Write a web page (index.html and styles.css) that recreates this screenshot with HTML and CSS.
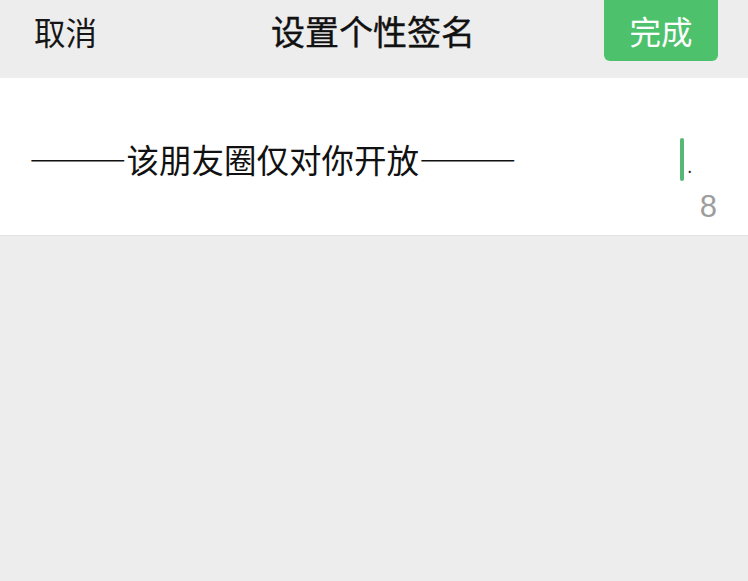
FILE: index.html
```html
<!DOCTYPE html>
<html lang="zh">
<head>
<meta charset="utf-8">
<link rel="stylesheet" href="styles.css">
</head>
<body>
<div class="page">
  <header class="bar">
    <span class="cancel">取消</span>
    <span class="title">设置个性签名</span>
    <span class="done">完成</span>
  </header>
  <section class="editor">
    <div class="line">
      <span class="text">———该朋友圈仅对你开放———</span>
      <span class="caret"></span><span class="dot">.</span>
    </div>
    <div class="count">8</div>
  </section>
</div>
</body>
</html>
```
FILE: styles.css
```css
* { box-sizing: border-box; }
html, body { margin: 0; padding: 0; }
body {
  width: 748px;
  height: 581px;
  background: #ededed;
  font-family: "Noto Sans CJK SC", "Noto Sans", sans-serif;
  overflow: hidden;
}
.page { width: 748px; height: 581px; background: #ededed; }
.bar {
  height: 78px;
  display: flex;
  align-items: flex-start;
  padding: 0 30px 0 34px;
  position: relative;
}
.cancel {
  font-size: 31.5px;
  line-height: 62px;
  color: #161616;
}
.title {
  position: absolute;
  left: 271px;
  top: 0;
  font-size: 34px;
  line-height: 62px;
  color: #111;
  font-weight: 400;
  -webkit-text-stroke: 0.4px #111;
}
.done {
  margin-left: auto;
  width: 114px;
  height: 61px;
  background: #4ec16c;
  color: #fff;
  border-radius: 0 0 6px 6px;
  font-size: 31.5px;
  line-height: 60px;
  text-align: center;
}
.editor {
  background: #fff;
  height: 158px;
  padding: 58px 30px 0 30px;
  position: relative;
  border-bottom: 1px solid #e2e2e2;
}
.line {
  display: flex;
  align-items: center;
  height: 46px;
}
.text {
  font-size: 32.5px;
  line-height: 46px;
  color: #111;
  white-space: nowrap;
  margin-left: -1px;
}
.caret {
  margin-left: auto;
  margin-right: 4px;
  width: 4px;
  height: 43px;
  background: #55b874;
  border-radius: 2px;
}
.dot {
  font-size: 16px;
  color: #222;
  align-self: flex-end;
  margin-right: 26px;
  margin-bottom: 8px;
  line-height: 16px;
}
.count {
  position: absolute;
  right: 31px;
  top: 109px;
  font-size: 31px;
  line-height: 40px;
  color: #9d9d9d;
  font-family: "Liberation Sans", "Noto Sans", sans-serif;
}
```
